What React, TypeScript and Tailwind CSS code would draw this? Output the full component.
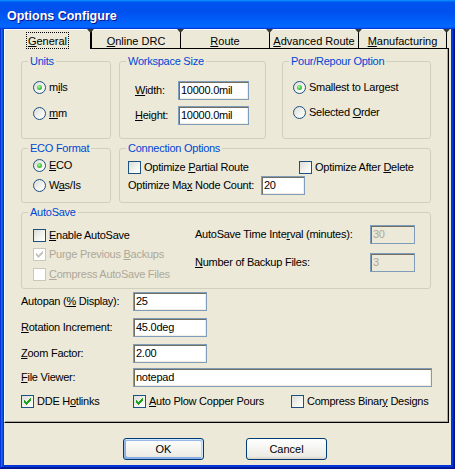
import React from "react";

function L({ t, u }: { t: string; u?: number }) {
  if (u === undefined) return <>{t}</>;
  return (
    <>
      {t.slice(0, u)}
      <span className="underline">{t[u]}</span>
      {t.slice(u + 1)}
    </>
  );
}

function CheckMark({ color }: { color: string }) {
  const r: [number, number, number][] = [
    [6, 0, 1],
    [5, 1, 2],
    [0, 2, 1],
    [4, 2, 3],
    [0, 3, 2],
    [3, 3, 3],
    [0, 4, 5],
    [1, 5, 3],
    [2, 6, 1],
  ];
  return (
    <svg width="11" height="11" viewBox="0 0 11 11" className="block" shapeRendering="crispEdges">
      {r.map(([x, y, w], i) => (
        <rect key={i} x={x + 2} y={y + 2} width={w} height={1} fill={color} />
      ))}
    </svg>
  );
}

function Check({ checked, disabled }: { checked?: boolean; disabled?: boolean }) {
  return (
    <span
      className={`block w-[13px] h-[13px] shrink-0 border ${
        disabled
          ? "border-[#CAC8BB] bg-white"
          : "border-[#1C5180] bg-[linear-gradient(135deg,#DCDCD7_0%,#F4F4F0_60%,#FFFFFF_100%)]"
      }`}
    >
      {checked && <CheckMark color={disabled ? "#CAC8BB" : "#21A121"} />}
    </span>
  );
}

function Radio({ checked }: { checked?: boolean }) {
  return (
    <span className="flex items-center justify-center w-[13px] h-[13px] shrink-0 rounded-full border border-[#1C5180] bg-[linear-gradient(135deg,#DCDCD7_0%,#F4F4F0_60%,#FFFFFF_100%)]">
      {checked && (
        <span className="block w-[5px] h-[5px] rounded-full bg-[radial-gradient(circle_at_40%_35%,#B8F5AE_0%,#55D551_40%,#1E9A1E_100%)]" />
      )}
    </span>
  );
}

function CheckRow({
  children,
  checked,
  disabled,
  className = "",
}: {
  children: React.ReactNode;
  checked?: boolean;
  disabled?: boolean;
  className?: string;
}) {
  return (
    <div className={`flex items-center gap-[3px] h-[16px] ${disabled ? "text-[#ACA899]" : ""} ${className}`}>
      <Check checked={checked} disabled={disabled} />
      <span className="whitespace-nowrap">{children}</span>
    </div>
  );
}

function RadioRow({ children, checked }: { children: React.ReactNode; checked?: boolean }) {
  return (
    <div className="flex items-center gap-[3px] h-[16px]">
      <Radio checked={checked} />
      <span className="whitespace-nowrap">{children}</span>
    </div>
  );
}

function Field({ value, w, disabled }: { value: string; w: string; disabled?: boolean }) {
  return (
    <div
      className={`h-[19px] ${w} shrink-0 border border-[#7F9DB9] pl-[2px] flex items-center whitespace-nowrap overflow-hidden ${
        disabled
          ? "bg-[#ECE9D8] text-[#ACA899] shadow-[inset_1px_1px_0_#716F64]"
          : "bg-white shadow-[inset_1px_1px_0_#716F64,inset_-1px_-1px_0_#F1EFE2]"
      }`}
    >
      {value}
    </div>
  );
}

function Notch() {
  return (
    <svg className="absolute -right-[4px] -top-[1px] z-20" width="7" height="4" viewBox="0 0 7 4">
      <polygon points="0,0 7,0 3.5,4" fill="#3A3A3A" />
    </svg>
  );
}

function Tab({ label, u, w }: { label: string; u: number; w: string }) {
  return (
    <div
      className={`relative ${w} h-[19px] shrink-0 bg-[#ECE9D8] border-t border-t-white border-r border-r-black flex justify-center pt-[5px] whitespace-nowrap`}
    >
      <L t={label} u={u} />
      <Notch />
    </div>
  );
}

const legend = "ml-[6px] px-[2px] text-[#0046D5] leading-[13px]";
const fs = "border border-[#D0D0BF] rounded-[3px] shrink-0";

export default function App() {
  return (
    <div className="w-[455px] h-[469px] flex flex-col bg-[#0831d9] shadow-[inset_-1px_-1px_#00138c,inset_1px_1px_#0831d9,inset_-2px_-2px_#001ea0,inset_2px_2px_#166aee,inset_-3px_-3px_#003bda,inset_3px_3px_#0855dd] font-['Liberation_Sans',Arial,sans-serif] text-[11px] leading-[13px] text-black">
      {/* title bar */}
      <div className="h-[29px] shrink-0 flex items-center pl-[7px] pt-[4px] bg-[linear-gradient(180deg,#0997ff,#0053ee_8%,#0050ee_40%,#0066ff_88%,#0066ff_93%,#005bff_95%,#003dd7_96%,#003dd7)]">
        <span className="text-white font-bold text-[12.5px] [text-shadow:1px_1px_#0f1089]">Options Configure</span>
      </div>

      {/* body */}
      <div className="mx-[4px] mb-[4px] flex-1 bg-[#ECE9D8] flex flex-col">
        {/* tabs */}
        <div className="h-[19px] flex shrink-0">
          <div className="relative z-10 w-[88px] h-[20px] shrink-0 bg-[#ECE9D8] border-t border-l border-white border-r-2 border-r-black flex justify-center">
            <span className="mt-[2px] self-start border border-dotted border-black px-[1px] pt-[2px] leading-[13px]">
              <L t="General" u={0} />
            </span>
            <Notch />
          </div>
          <Tab label="Online DRC" u={0} w="w-[89px]" />
          <Tab label="Route" u={0} w="w-[89px]" />
          <Tab label="Advanced Route" u={0} w="w-[89px]" />
          <Tab label="Manufacturing" u={0} w="w-[88px]" />
        </div>

        {/* panel */}
        <div className="w-[445px] h-[375px] shrink-0 border border-black border-l-white shadow-[inset_-1px_-1px_#ACA899] pl-[16px] pt-[6px] flex flex-col tracking-[-0.25px]">
          {/* row 1 */}
          <div className="flex">
            <fieldset className={`w-[90px] h-[84px] ${fs}`}>
              <legend className={legend}>Units</legend>
              <div className="pl-[11px] pt-[11px] flex flex-col gap-[10px]">
                <RadioRow checked>
                  <L t="mils" u={1} />
                </RadioRow>
                <RadioRow>
                  <L t="mm" u={0} />
                </RadioRow>
              </div>
            </fieldset>
            <fieldset className={`ml-[8px] w-[147px] h-[84px] ${fs}`}>
              <legend className={legend}>Workspace Size</legend>
              <div className="pl-[15px] pt-[13px] flex flex-col gap-[6px]">
                <div className="flex items-center h-[19px]">
                  <span className="w-[43px] shrink-0">
                    <L t="Width:" u={0} />
                  </span>
                  <Field value="10000.0mil" w="w-[71px]" />
                </div>
                <div className="flex items-center h-[19px]">
                  <span className="w-[43px] shrink-0">
                    <L t="Height:" u={0} />
                  </span>
                  <Field value="10000.0mil" w="w-[71px]" />
                </div>
              </div>
            </fieldset>
            <fieldset className={`ml-[16px] w-[149px] h-[84px] ${fs}`}>
              <legend className={legend}>Pour/Repour Option</legend>
              <div className="pl-[10px] pt-[11px] flex flex-col gap-[9px]">
                <RadioRow checked>Smallest to Largest</RadioRow>
                <RadioRow>
                  <L t="Selected Order" u={9} />
                </RadioRow>
              </div>
            </fieldset>
          </div>

          {/* row 2 */}
          <div className="flex mt-[3px]">
            <fieldset className={`w-[90px] h-[61px] ${fs}`}>
              <legend className={legend}>ECO Format</legend>
              <div className="pl-[11px] pt-[2px] flex flex-col gap-[4px]">
                <RadioRow checked>
                  <L t="ECO" u={0} />
                </RadioRow>
                <RadioRow>
                  <L t="Was/Is" u={1} />
                </RadioRow>
              </div>
            </fieldset>
            <fieldset className={`ml-[8px] w-[312px] h-[61px] ${fs}`}>
              <legend className={legend}>Connection Options</legend>
              <div className="pl-[8px] pt-[4px] flex flex-col">
                <div className="flex">
                  <div className="w-[171px] shrink-0">
                    <CheckRow>
                      <L t="Optimize Partial Route" u={9} />
                    </CheckRow>
                  </div>
                  <CheckRow>
                    <L t="Optimize After Delete" u={15} />
                  </CheckRow>
                </div>
                <div className="flex items-center h-[19px] mt-[1px]">
                  <span className="w-[133px] shrink-0 whitespace-nowrap">
                    <L t="Optimize Max Node Count:" u={11} />
                  </span>
                  <Field value="20" w="w-[44px]" />
                </div>
              </div>
            </fieldset>
          </div>

          {/* row 3 */}
          <fieldset className={`mt-[3px] w-[410px] h-[83px] ${fs}`}>
            <legend className={legend}>AutoSave</legend>
            <div className="flex pl-[11px]">
              <div className="w-[162px] shrink-0 pt-[8px] flex flex-col">
                <CheckRow>
                  <L t="Enable AutoSave" u={0} />
                </CheckRow>
                <CheckRow className="mt-[3px]" checked disabled>
                  <L t="Purge Previous Backups" u={15} />
                </CheckRow>
                <CheckRow className="mt-[4px]" disabled>
                  <L t="Compress AutoSave Files" u={0} />
                </CheckRow>
              </div>
              <div className="pt-[6px] flex flex-col gap-[9px]">
                <div className="flex items-center h-[19px]">
                  <span className="w-[175px] shrink-0 whitespace-nowrap">
                    <L t="AutoSave Time Interval (minutes):" u={18} />
                  </span>
                  <Field value="30" w="w-[45px]" disabled />
                </div>
                <div className="flex items-center h-[19px]">
                  <span className="w-[175px] shrink-0 whitespace-nowrap">
                    <L t="Number of Backup Files:" u={0} />
                  </span>
                  <Field value="3" w="w-[45px]" disabled />
                </div>
              </div>
            </div>
          </fieldset>

          {/* bottom fields */}
          <div className="mt-[3px] flex flex-col">
            <div className="flex items-center h-[19px]">
              <span className="w-[112px] shrink-0 whitespace-nowrap">
                <L t="Autopan (% Display):" u={9} />
              </span>
              <Field value="25" w="w-[74px]" />
            </div>
            <div className="flex items-center h-[19px] mt-[7px]">
              <span className="w-[112px] shrink-0 whitespace-nowrap">
                <L t="Rotation Increment:" u={0} />
              </span>
              <Field value="45.0deg" w="w-[74px]" />
            </div>
            <div className="flex items-center h-[19px] mt-[7px]">
              <span className="w-[112px] shrink-0 whitespace-nowrap">
                <L t="Zoom Factor:" u={0} />
              </span>
              <Field value="2.00" w="w-[74px]" />
            </div>
            <div className="flex items-center h-[19px] mt-[5px]">
              <span className="w-[112px] shrink-0 whitespace-nowrap">
                <L t="File Viewer:" u={0} />
              </span>
              <Field value="notepad" w="w-[299px]" />
            </div>
            <div className="flex mt-[6px]">
              <div className="w-[112px] shrink-0">
                <CheckRow checked>
                  <L t="DDE Hotlinks" u={5} />
                </CheckRow>
              </div>
              <div className="w-[158px] shrink-0">
                <CheckRow checked>
                  <L t="Auto Plow Copper Pours" u={0} />
                </CheckRow>
              </div>
              <CheckRow>
                <L t="Compress Binary Designs" u={14} />
              </CheckRow>
            </div>
          </div>
        </div>

        {/* buttons */}
        <div className="mt-[15px] flex pl-[119px] gap-[42px]">
          <button className="w-[81px] h-[22px] rounded-[3px] border border-[#003c74] bg-[linear-gradient(180deg,#ffffff,#ecebe5_86%,#d8d0c4)] shadow-[inset_-1px_1px_#cee7ff,inset_1px_2px_#98b8ea,inset_-2px_2px_#bcd4f6,inset_1px_-1px_#89ade4,inset_2px_-2px_#89ade4] text-[11px] leading-[13px]">
            OK
          </button>
          <button className="w-[81px] h-[22px] rounded-[3px] border border-[#003c74] bg-[linear-gradient(180deg,#ffffff,#ecebe5_86%,#d8d0c4)] text-[11px] leading-[13px]">
            Cancel
          </button>
        </div>
      </div>
    </div>
  );
}
